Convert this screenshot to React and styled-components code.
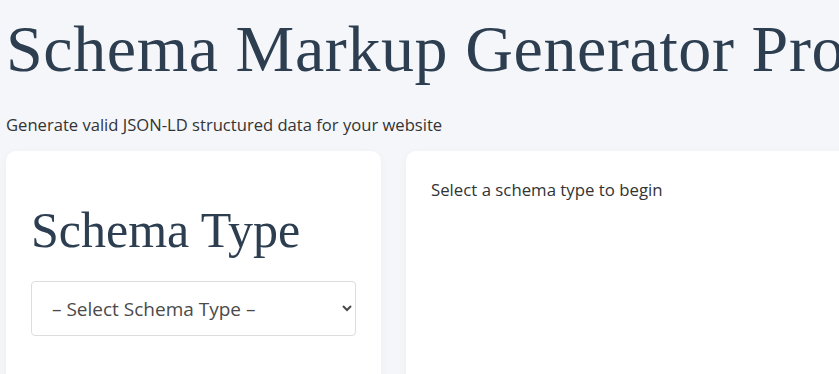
import React, { useState } from "react";
import styled, { createGlobalStyle } from "styled-components";

const GlobalStyle = createGlobalStyle`
	html, body {
		margin: 0;
		padding: 0;
		background: #f5f6fa;
		overflow: hidden;
	}
	body {
		font-family: "Open Sans", "Noto Sans", sans-serif;
		color: #333;
	}
`;

const Page = styled.div`
	width: 1200px;
	padding: 0 6px;
`;

const Title = styled.h1`
	font-family: "Liberation Serif", serif;
	font-weight: 400;
	font-size: 66px;
	line-height: 1;
	letter-spacing: 0.6px;
	color: #2c3e50;
	margin: 0;
	padding-top: 16px;
	white-space: nowrap;
`;

const Subtitle = styled.p`
	font-size: 16.6px;
	line-height: 24px;
	margin: 31px 0 14px;
	color: #333;
`;

const Layout = styled.div`
	display: grid;
	grid-template-columns: 375px 1fr;
	gap: 25px;
`;

const Card = styled.section`
	background: #fff;
	border-radius: 10px;
	padding: 25px;
	min-height: 300px;
	box-shadow: 0 2px 8px rgba(0, 0, 0, 0.04);
`;

const CardTitle = styled.h2`
	font-family: "Liberation Serif", serif;
	font-weight: 400;
	font-size: 50px;
	line-height: 60px;
	color: #2c3e50;
	margin: 24px 0 21px;
`;

const Select = styled.select`
	width: 100%;
	height: 55px;
	padding: 0 10px 0 16px;
	font-family: inherit;
	font-size: 19px;
	color: #4a4a4a;
	background: #fff;
	border: 1px solid #ddd;
	border-radius: 4px;
`;

const Placeholder = styled.p`
	margin: 0;
	font-size: 16.8px;
	line-height: 28px;
	color: #333;
`;

const types = ["Article", "Product", "LocalBusiness", "Organization", "Event", "FAQPage", "Recipe"];

export default function App() {
	const [type, setType] = useState("");

	return (
		<>
			<GlobalStyle />
			<Page>
				<Title>Schema Markup Generator Pro</Title>
				<Subtitle>Generate valid JSON-LD structured data for your website</Subtitle>
				<Layout>
					<Card>
						<CardTitle>Schema Type</CardTitle>
						<Select value={type} onChange={e => setType(e.target.value)}>
							<option value="">– Select Schema Type –</option>
							{types.map(t => (
								<option key={t} value={t}>
									{t}
								</option>
							))}
						</Select>
					</Card>
					<Card>
						<Placeholder>{type ? `Fill in the ${type} fields` : "Select a schema type to begin"}</Placeholder>
					</Card>
				</Layout>
			</Page>
		</>
	);
}
